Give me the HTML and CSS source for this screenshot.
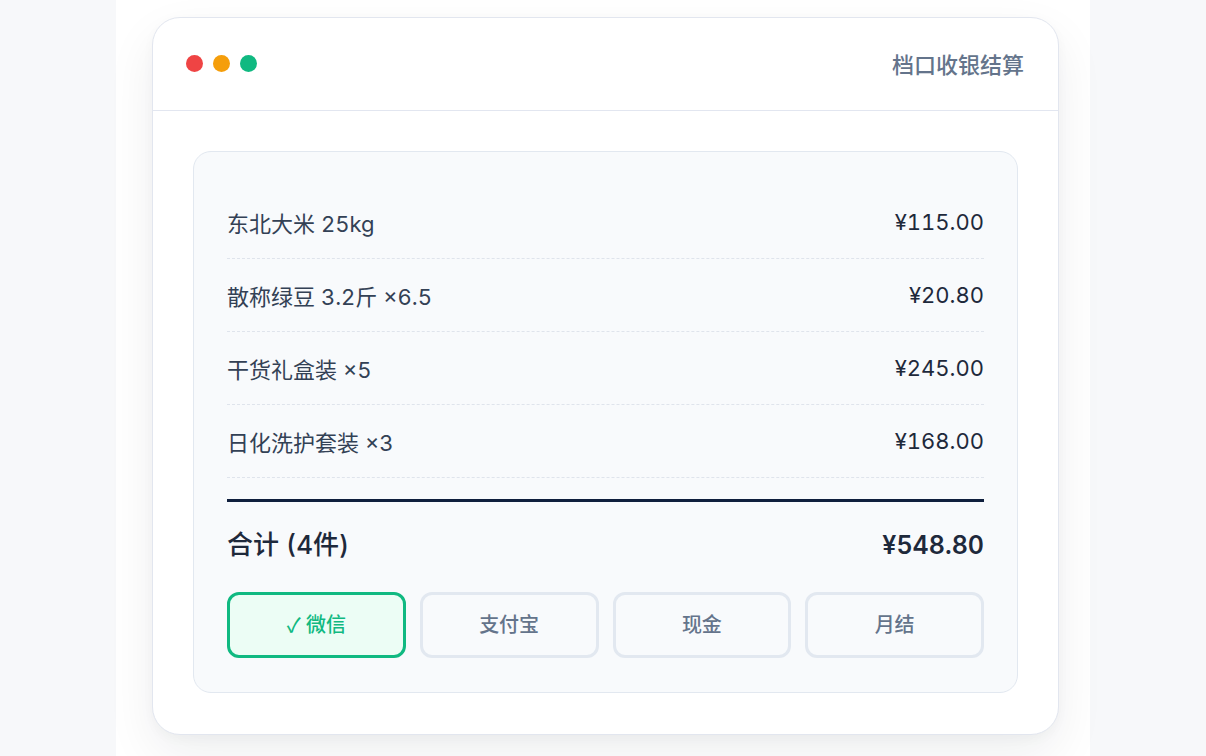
FILE: index.html
```html
<!DOCTYPE html>
<html lang="zh-CN">
<head>
  <meta charset="utf-8">
  <title>档口收银结算</title>
  <link rel="stylesheet" href="styles.css">
</head>
<body>
<div class="page">
  <div class="card">
    <header class="card-head">
      <div class="dots">
        <span class="dot red"></span>
        <span class="dot amber"></span>
        <span class="dot green"></span>
      </div>
      <h1 class="title">档口收银结算</h1>
    </header>

    <div class="card-body">
      <div class="receipt">
        <ul class="items">
          <li class="item"><span class="name">东北大米 25kg</span><span class="price">¥115.00</span></li>
          <li class="item"><span class="name">散称绿豆 3.2斤 ×6.5</span><span class="price">¥20.80</span></li>
          <li class="item"><span class="name">干货礼盒装 ×5</span><span class="price">¥245.00</span></li>
          <li class="item"><span class="name">日化洗护套装 ×3</span><span class="price">¥168.00</span></li>
        </ul>

        <div class="total">
          <span class="total-label">合计 (4件)</span>
          <span class="total-sum">¥548.80</span>
        </div>

        <div class="pay">
          <button type="button" class="pay-btn active"><span class="tick">✓</span> 微信</button>
          <button type="button" class="pay-btn">支付宝</button>
          <button type="button" class="pay-btn">现金</button>
          <button type="button" class="pay-btn">月结</button>
        </div>
      </div>
    </div>
  </div>
</div>
</body>
</html>
```

FILE: styles.css
```css
* {
  box-sizing: border-box;
}
html, body {
  margin: 0;
  height: 100%;
}
body {
  background: #f7f8fa;
  font-family: "Inter", "Noto Sans CJK SC", sans-serif;
  font-variant-numeric: tabular-nums;
  color: #1e293b;
}

/* 中间白色栏 */
.page {
  width: 974px;
  min-height: 100%;
  margin: 0 auto;
  padding: 17px 31px 0 36px;
  background: #fff;
}

.card {
  width: 907px;
  background: #fff;
  border: 1px solid #e2e6ef;
  border-radius: 28px;
  box-shadow: 0 20px 50px rgba(15, 23, 42, 0.07), 0 4px 12px rgba(15, 23, 42, 0.03);
}

/* 顶部标题栏 */
.card-head {
  height: 93px;
  display: flex;
  align-items: center;
  justify-content: space-between;
  padding: 0 34px 2px 33px;
  border-bottom: 1px solid #e2e6f0;
}
.dots {
  display: flex;
  gap: 10px;
}
.dot {
  width: 17px;
  height: 17px;
  border-radius: 50%;
}
.red { background: #ef4444; }
.amber { background: #f59e0b; }
.green { background: #10b981; }
.title {
  margin: 0;
  font-size: 22px;
  font-weight: 500;
  color: #64748b;
}

.card-body {
  padding: 40px 40px 41px;
}

/* 小票区域 */
.receipt {
  background: #f8fafc;
  border: 1px solid #e2e8f0;
  border-radius: 18px;
  padding: 34px 33px 34px 33px;
}
.items {
  list-style: none;
  margin: 0;
  padding: 0;
}
.item {
  display: flex;
  justify-content: space-between;
  align-items: center;
  height: 73px;
  border-bottom: 1px dashed #dfe4ec;
  font-size: 22px;
}
.name {
  color: #334155;
}
.price {
  color: #1e293b;
}

.total {
  display: flex;
  justify-content: space-between;
  align-items: center;
  margin-top: 21px;
  border-top: 3px solid #0f1f3d;
  padding: 27px 0 31px;
  line-height: 32px;
}
.total-label {
  font-size: 26px;
  font-weight: 500;
  color: #1e293b;
}
.total-sum {
  font-size: 25px;
  font-weight: 600;
  color: #1e293b;
}

/* 支付方式 */
.pay {
  display: grid;
  grid-template-columns: repeat(4, 1fr);
  gap: 14px;
}
.pay-btn {
  height: 66px;
  padding: 0 0 3px;
  border: 3px solid #e2e8f0;
  border-radius: 12px;
  background: #f8fafc;
  font-family: inherit;
  font-size: 20px;
  font-weight: 500;
  color: #64748b;
}
.pay-btn.active {
  border-color: #10b981;
  background: #ecfdf5;
  color: #10b981;
}
.tick {
  font-family: "Noto Sans CJK SC", sans-serif;
}
```
